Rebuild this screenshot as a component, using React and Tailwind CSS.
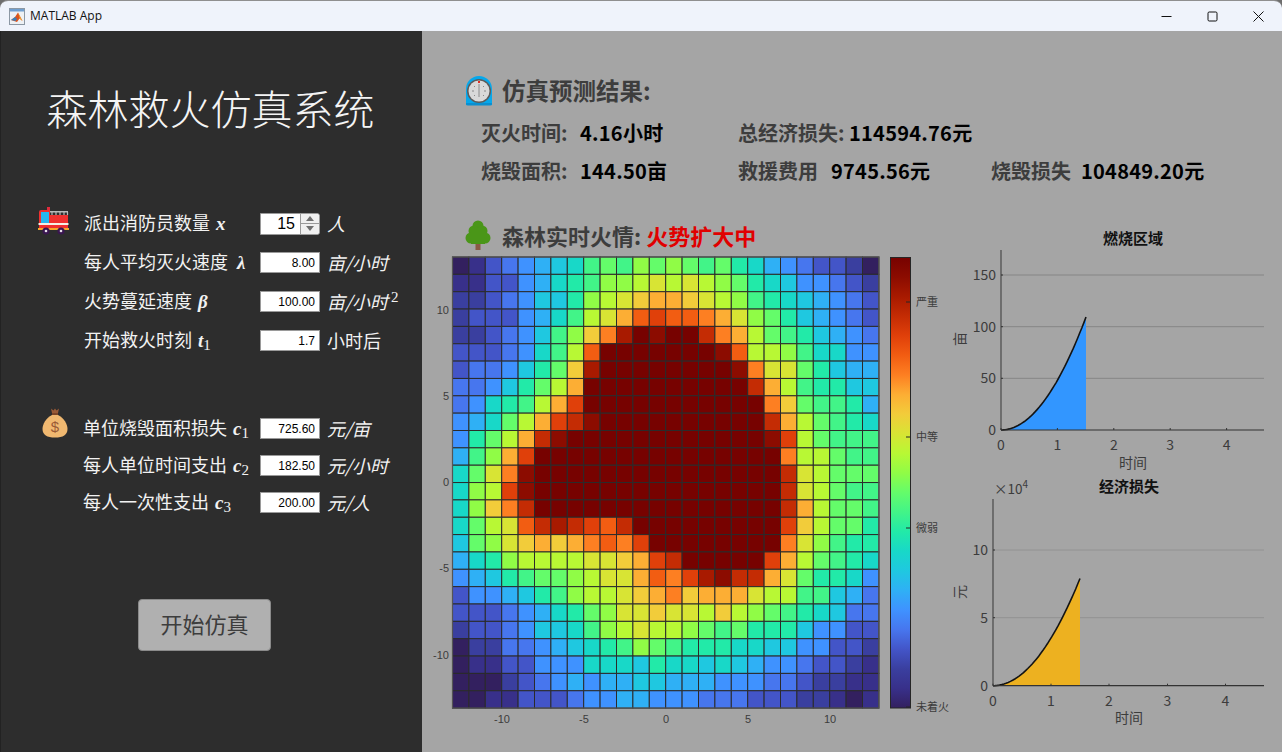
const PALETTE = [
  '#33205f', '#38308a', '#3a3f9f', '#4355c8', '#4776ee', '#3f92ff', '#2fb0f5', '#1fc8e0',
  '#18d8c8', '#22eaa8', '#42f488', '#64fc6a', '#90fc46', '#b8f834', '#d8e434', '#f2cc3a',
  '#fcae34', '#fd7f22', '#f25d12', '#e0400a', '#c42c04', '#a81a00', '#8c0c00', '#770200',
];

// one char per cell, index into PALETTE (base 36)
const FIRE = [
  '01345678abacbcbab986543320',
  '11335689accdededcb98755432',
  '22345779cdefggfedca9876543',
  '2333568adegijiihgecb976543',
  '223457acfhlnmnnkhgdba97654',
  '333458adinnnnnnnmiddca8855',
  '344579bflnnnnnnnnmheeb9766',
  '44579bdgnnnnnnnnnnkgda9977',
  '4589adgjnnnnnnnnnnnhfbaa96',
  '568bdgjkmnnnnnnnnnnkgdba98',
  '59bdgkmnnnnnnnnnnnnmjdbaaa',
  '6acgjnnnnnnnnnnnnnnnhddbaa',
  '8behmnnnnnnnnnnnnnnnkedbbb',
  '8cdjmnnnnnnnnnnnnnnnkedbaa',
  '8cfhknnnnnnnnnnnnnnnkgdbba',
  '8bdeiklkjiknnnnnnnnnjfdbb9',
  '7bcefgfghihjnnnnnnnnheca99',
  '689cddddeefgjknnnnnjgdba98',
  '5679abbcdeegihjlmkkgeb9985',
  '355679acddefghfgggeddaa764',
  '33345689bceefeedfdcba98744',
  '23345778acdeddcbab99975533',
  '0224456789acba999887755332',
  '01133555888798878765543321',
  '00023456566776665554432211',
  '00113334556655544433322101',
];

const HX = 452.5;
const HY = 257;
const CW = 16.4;
const CH = 17.35;

function Logo() {
  return (
    <svg width="16" height="17" viewBox="0 0 16 17" className="shrink-0">
      <rect x="0.5" y="0.5" width="15" height="16" fill="#eef1f4" stroke="#8c98a4" />
      <rect x="1" y="1" width="14" height="2.5" fill="#6f9fd0" />
      <path d="M2 12 L6 9 L9 4.5 L13.5 13 L10.5 10.5 L8 14 Z" fill="#d9531e" />
      <path d="M2 12 L6 9 L8 11 L6.5 13 Z" fill="#3c7fb8" />
      <path d="M9 4.5 L13.5 13 L11 11 Z" fill="#f0a030" />
    </svg>
  );
}

function FireTruck() {
  return (
    <svg width="31" height="28" viewBox="0 0 31 28" className="shrink-0 ml-[37px] -mt-[5px]">
      <rect x="9" y="0" width="3" height="3" fill="#e02b3c" />
      <path d="M1 5 Q1 3 3 3 L12 3 L12 8 L30 8 L30 21 L1 21 Z" fill="#f0302f" />
      <rect x="12" y="4" width="18" height="1.5" fill="#b9b9b9" />
      <path d="M14 5 V8 M18 5 V8 M22 5 V8 M26 5 V8 M29.5 5 V8" stroke="#b9b9b9" strokeWidth="1.2" />
      <rect x="3" y="5" width="8" height="11" fill="#27b7ef" />
      <rect x="0.5" y="16" width="30" height="2" fill="#f4efe6" />
      <rect x="0" y="21" width="31" height="2" fill="#f7a72a" />
      <circle cx="8" cy="24" r="3.6" fill="#3a1650" />
      <circle cx="8" cy="24" r="1.3" fill="#e6e0ea" />
      <circle cx="23" cy="24" r="3.6" fill="#3a1650" />
      <circle cx="23" cy="24" r="1.3" fill="#e6e0ea" />
    </svg>
  );
}

function MoneyBag() {
  return (
    <svg width="26" height="30" viewBox="0 0 26 30" className="shrink-0 ml-[41px] -mt-[11px]">
      <path d="M9 0.5 L11.5 2.5 L13 0.5 L14.5 2.5 L17 0.5 L16 5 L10 5 Z" fill="#9a5a36" />
      <path d="M10 5 H16 V7 H10 Z" fill="#7c4527" />
      <path d="M10 7 H16 C22 10 25.5 16 25.5 21 C25.5 27 21 29.5 13 29.5 C5 29.5 0.5 27 0.5 21 C0.5 16 4 10 10 7 Z" fill="#f0b870" />
      <text x="13" y="23.5" textAnchor="middle" fontSize="15" fill="#9a5a36" className="font-['Liberation_Sans',sans-serif]">$</text>
    </svg>
  );
}

function Stopwatch() {
  return (
    <svg width="28" height="30" viewBox="0 0 28 30" className="shrink-0">
      <path d="M1 29 V13 A13 13 0 0 1 27 13 V29 Z" fill="#06a8ec" />
      <path d="M1 27 H27 V28 Q27 29.5 25 29.5 H3 Q1 29.5 1 28 Z" fill="#0a8fd0" />
      <circle cx="14" cy="15" r="12" fill="#5c5c5c" />
      <circle cx="14" cy="15" r="10.5" fill="#d9d9d9" />
      <rect x="13" y="5" width="2" height="2" fill="#e02b20" />
      <path d="M14 8 V21 M7 15 H9 M19 15 H21 M9 10 L10 11 M19 10 L18 11 M9 20 L10 19 M19 20 L18 19" stroke="#8a8a8a" strokeWidth="1" />
    </svg>
  );
}

function Tree() {
  return (
    <svg width="26" height="30" viewBox="0 0 26 30" className="shrink-0">
      <rect x="10.5" y="23" width="5" height="7" fill="#8a5a44" />
      <circle cx="13" cy="6" r="5.5" fill="#4a9618" />
      <circle cx="9" cy="11" r="5.5" fill="#4a9618" />
      <circle cx="17" cy="11" r="5.5" fill="#4a9618" />
      <circle cx="6" cy="18" r="5.5" fill="#4a9618" />
      <circle cx="20" cy="18" r="5.5" fill="#4a9618" />
      <rect x="6" y="10" width="14" height="14" fill="#4a9618" />
    </svg>
  );
}

function Symbol({ s, sub, wide }) {
  return (
    <span className={`font-['Liberation_Serif',serif] italic font-bold text-[19px] ${wide ? 'ml-[9px]' : 'ml-[6px]'}`}>
      {s}
      {sub && <span className="not-italic font-normal text-[15px] relative top-[3px]">{sub}</span>}
    </span>
  );
}

function ParamRow({ icon, label, s, sub, wide, value, unit, italic, sup, inset, children }) {
  return (
    <div className="flex items-center h-[21px]">
      <div className="w-[82px] shrink-0 flex items-center">{icon}</div>
      <div className={`w-[177px] shrink-0 text-[18px] whitespace-nowrap text-[#f2f2f2] ${inset ? 'pl-[1px]' : ''}`}>
        {label}
        <Symbol s={s} sub={sub} wide={wide} />
      </div>
      {children || (
        <input
          readOnly
          value={value}
          className="w-[60px] h-[21px] bg-white border border-[#9a9a9a] text-right pr-[4px] text-[12px] text-black outline-none font-['Liberation_Sans',sans-serif]"
        />
      )}
      <span className={`ml-[7px] text-[18px] text-[#f2f2f2] whitespace-nowrap ${italic ? 'italic' : ''}`}>
        {unit}
        {sup && <sup className="not-italic font-['Liberation_Serif',serif] text-[15px] ml-[3px]">{sup}</sup>}
      </span>
    </div>
  );
}

function Spinner() {
  return (
    <div className="w-[60px] h-[22px] flex bg-white border border-[#9a9a9a] rounded-r-[3px] overflow-hidden">
      <input readOnly value="15" className="w-[39px] text-right pr-[5px] text-[16px] text-black outline-none font-['Liberation_Sans',sans-serif]" />
      <div className="flex-1 flex flex-col border-l border-[#9a9a9a] bg-[#f0f0f0]">
        <div className="flex-1 flex items-center justify-center border-b border-[#9a9a9a]">
          <div className="w-0 h-0 border-x-[4px] border-x-transparent border-b-[5px] border-b-[#707070]" />
        </div>
        <div className="flex-1 flex items-center justify-center">
          <div className="w-0 h-0 border-x-[4px] border-x-transparent border-t-[5px] border-t-[#707070]" />
        </div>
      </div>
    </div>
  );
}

function Result({ label, value, labelWidth }) {
  return (
    <div className="flex items-center h-[28px] font-bold text-[20px] whitespace-nowrap">
      <span className="text-[#3d3d3d]" style={{ width: labelWidth }}>{label}</span>
      <span className="text-black tracking-[0.25px]">{value}</span>
    </div>
  );
}

function HeatMap() {
  const stops = PALETTE.map((c, i) => (
    <stop key={i} offset={`${(i / (PALETTE.length - 1)) * 100}%`} stopColor={c} />
  ));
  const xTicks = [[-10, 502], [-5, 584], [0, 666], [5, 748], [10, 830]];
  const yTicks = [[10, 310], [5, 396], [0, 482], [-5, 568], [-10, 655]];
  const barTicks = [['严重', 302], ['中等', 437], ['微弱', 528], ['未着火', 707]];
  return (
    <svg width="528" height="480" viewBox="422 251 528 480" className="block">
      <defs>
        <linearGradient id="fireBar" x1="0" y1="1" x2="0" y2="0">{stops}</linearGradient>
      </defs>
      {FIRE.map((row, r) =>
        row.split('').map((ch, c) => (
          <rect
            key={`${r}-${c}`}
            x={HX + c * CW}
            y={HY + r * CH}
            width={CW}
            height={CH}
            fill={PALETTE[parseInt(ch, 36)]}
            stroke="#2b2b2b"
            strokeWidth="1"
          />
        ))
      )}
      <rect x={HX} y={HY} width={CW * 26} height={CH * 26} fill="none" stroke="#555" strokeWidth="1.2" />
      {xTicks.map(([t, x]) => (
        <text key={t} x={x} y="723" textAnchor="middle" fontSize="11" fill="#3c3c3c" className="font-['Liberation_Sans',sans-serif]">{t}</text>
      ))}
      {yTicks.map(([t, y]) => (
        <text key={t} x="449" y={y + 4} textAnchor="end" fontSize="11" fill="#3c3c3c" className="font-['Liberation_Sans',sans-serif]">{t}</text>
      ))}
      <rect x="890.5" y="257.5" width="20" height="450.5" fill="url(#fireBar)" stroke="#262626" strokeWidth="1" />
      {barTicks.map(([t, y]) => (
        <g key={t}>
          <line x1="906" x2="910" y1={y} y2={y} stroke="#262626" strokeWidth="1" />
          <text x="916" y={y + 4} fontSize="11" fill="#3c3c3c">{t}</text>
        </g>
      ))}
    </svg>
  );
}

function Chart({ box, axisX, top, bottom, xTicks, yTicks, endX, endY, fill, gridColor, title, titleX, titleY, labelY, yLabel, yLabelY, children }) {
  const k = bottom - endY;
  const w = endX - axisX;
  const pts = [];
  for (let i = 0; i <= 40; i++) {
    const t = i / 40;
    pts.push(`${(axisX + w * t).toFixed(1)},${(bottom - k * t * t).toFixed(1)}`);
  }
  const line = pts.join(' ');
  return (
    <svg width="332" height={box[3]} viewBox={box.join(' ')} className="block">
      {yTicks.slice(1).map(([, y]) => (
        <line key={y} x1={axisX} x2="1264" y1={y} y2={y} stroke={gridColor} strokeWidth="1" />
      ))}
      <polygon points={`${line} ${endX},${bottom}`} fill={fill} />
      <polyline points={line} fill="none" stroke="#141414" strokeWidth="1.6" />
      <line x1={axisX} x2={axisX} y1={top} y2={bottom} stroke="#484848" strokeWidth="1.2" />
      <line x1={axisX} x2="1264" y1={bottom} y2={bottom} stroke="#333" strokeWidth="1.2" />
      {xTicks.map(([t, x]) => (
        <g key={t}>
          <line x1={x} x2={x} y1={bottom - 2} y2={bottom} stroke="#333" strokeWidth="1" />
          <text x={x} y={bottom + 20} textAnchor="middle" fontSize="14" fill="#3c3c3c">{t}</text>
        </g>
      ))}
      {yTicks.map(([t, y]) => (
        <g key={t}>
          <line x1={axisX} x2={axisX + 2} y1={y} y2={y} stroke="#333" strokeWidth="1" />
          <text x={axisX - 5} y={y + 5} textAnchor="end" fontSize="14" fill="#3c3c3c">{t}</text>
        </g>
      ))}
      <text x={titleX} y={titleY} textAnchor="middle" fontSize="15" fontWeight="700" fill="#111">{title}</text>
      <text x={titleX} y={labelY} textAnchor="middle" fontSize="14" fill="#3c3c3c">时间</text>
      <text
        x="965"
        y={yLabelY}
        textAnchor="middle"
        fontSize="14"
        fill="#3c3c3c"
        transform={`rotate(-90 965 ${yLabelY})`}
      >
        {yLabel}
      </text>
      {children}
    </svg>
  );
}

export default function App() {
  return (
    <div className="w-[1282px] h-[752px] overflow-hidden bg-[#6e6e6e] font-['Noto_Sans_CJK_SC',sans-serif]">
      <div className="h-full flex flex-col rounded-t-[8px] overflow-hidden border-t border-[#8f8f8f]">

        {/* title bar */}
        <div className="h-[30px] shrink-0 flex items-center bg-[#eff3fb] pl-[9px]">
          <Logo />
          <span className="ml-[5px] text-[12px] text-[#111] font-['Open_Sans',sans-serif]">MATLAB App</span>
          <div className="ml-auto flex items-center gap-[35px] pr-[18px]">
            <svg width="11" height="11" viewBox="0 0 11 11"><path d="M0.5 5.5 H10.5" stroke="#111" strokeWidth="1" /></svg>
            <svg width="11" height="11" viewBox="0 0 11 11"><rect x="1" y="1" width="9" height="9" rx="1.2" fill="none" stroke="#111" strokeWidth="1" /></svg>
            <svg width="11" height="11" viewBox="0 0 11 11"><path d="M0.5 0.5 L10.5 10.5 M10.5 0.5 L0.5 10.5" stroke="#111" strokeWidth="1" /></svg>
          </div>
        </div>

        <div className="flex-1 flex">

          {/* parameters */}
          <div className="w-[422px] shrink-0 bg-[#2d2d2d] flex flex-col border-l border-[#222]">
            <h1 className="mt-[49px] h-[56px] flex items-center justify-center pr-[2px] text-[41px] font-light text-[#f4f4f4] whitespace-nowrap">
              森林救火仿真系统
            </h1>
            <div className="mt-[77px] flex flex-col gap-[18px]">
              <ParamRow icon={<FireTruck />} label="派出消防员数量" s="x" unit="人" italic inset>
                <Spinner />
              </ParamRow>
              <ParamRow label="每人平均灭火速度" s="λ" wide value="8.00" unit="亩/小时" italic inset />
              <ParamRow label="火势蔓延速度" s="β" value="100.00" unit="亩/小时" sup="2" italic inset />
              <ParamRow label="开始救火时刻" s="t" sub="1" value="1.7" unit="小时后" inset />
            </div>
            <div className="mt-[67px] flex flex-col gap-[16px]">
              <ParamRow icon={<MoneyBag />} label="单位烧毁面积损失" s="c" sub="1" value="725.60" unit="元/亩" italic />
              <ParamRow label="每人单位时间支出" s="c" sub="2" value="182.50" unit="元/小时" italic />
              <ParamRow label="每人一次性支出" s="c" sub="3" value="200.00" unit="元/人" italic />
            </div>
            <button className="mt-[86px] ml-[137px] w-[133px] h-[52px] pb-[3px] rounded-[4px] bg-[#b0b0b0] border border-[#8a8a8a] text-[22px] text-[#3d3d3d]">
              开始仿真
            </button>
          </div>

          {/* results */}
          <div className="flex-1 bg-[#a5a5a5] flex flex-col">
            <div className="mt-[46px] h-[30px] pb-[2px] pl-[43px] flex items-center gap-[9px]">
              <Stopwatch />
              <span className="text-[23.5px] font-bold text-[#3d3d3d]">仿真预测结果:</span>
            </div>
            <div className="mt-[12px] pl-[59px] grid grid-cols-[257px_253px_1fr] gap-y-[10px]">
              <Result label="灭火时间:" value="4.16小时" labelWidth={99} />
              <Result label="总经济损失:" value="114594.76元" labelWidth={111} />
              <div />
              <Result label="烧毁面积:" value="144.50亩" labelWidth={99} />
              <Result label="救援费用" value="9745.56元" labelWidth={93} />
              <Result label="烧毁损失" value="104849.20元" labelWidth={90} />
            </div>
            <div className="mt-[36px] flex">
              <div className="w-[528px] shrink-0 flex flex-col">
                <div className="h-[30px] pb-[2px] pl-[43px] flex items-center gap-[11px]">
                  <Tree />
                  <span className="text-[22px] font-bold text-[#3d3d3d]">
                    森林实时火情: <span className="text-[#e00000]">火势扩大中</span>
                  </span>
                </div>
                <HeatMap />
              </div>
              <div className="flex-1 flex flex-col">
                <Chart
                  box={[950, 221, 332, 254]}
                  axisX={1001}
                  top={250}
                  bottom={430}
                  xTicks={[[0, 1001], [1, 1057.4], [2, 1113.8], [3, 1170.2], [4, 1226.6]]}
                  yTicks={[[0, 430], [50, 378.3], [100, 326.7], [150, 275]]}
                  endX={1086}
                  endY={317}
                  fill="#3296ff"
                  gridColor="#858585"
                  title="燃烧区域"
                  titleX={1133}
                  titleY={244}
                  labelY={468}
                  yLabel="亩"
                  yLabelY={339}
                />
                <Chart
                  box={[950, 475, 332, 256]}
                  axisX={993}
                  top={499}
                  bottom={685.7}
                  xTicks={[[0, 993], [1, 1051], [2, 1109], [3, 1167.5], [4, 1225.5]]}
                  yTicks={[[0, 685.7], [5, 617.7], [10, 550]]}
                  endX={1080}
                  endY={578.5}
                  fill="#edb120"
                  gridColor="#929292"
                  title="经济损失"
                  titleX={1129}
                  titleY={492}
                  labelY={723}
                  yLabel="元"
                  yLabelY={592}
                >
                  <text x="994" y="494" fontSize="13.5" fill="#3c3c3c">×10<tspan fontSize="10" dy="-6">4</tspan></text>
                </Chart>
              </div>
            </div>
          </div>
        </div>
      </div>
    </div>
  );
}
